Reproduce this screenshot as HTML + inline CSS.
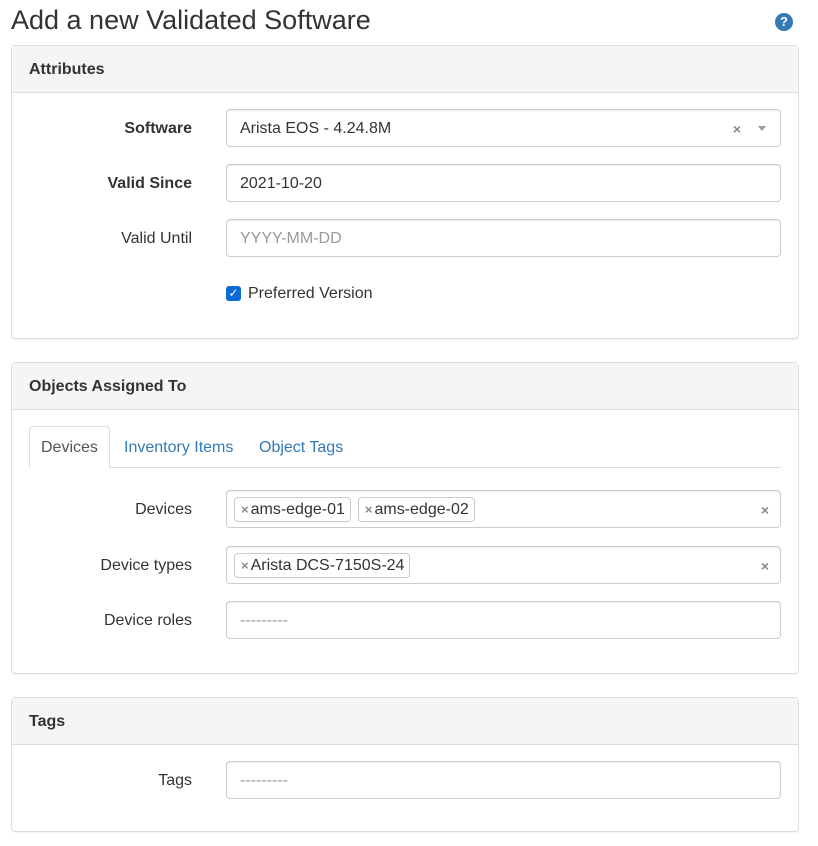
<!DOCTYPE html>
<html><head><meta charset="utf-8"><style>
*{box-sizing:border-box;margin:0;padding:0}
body{width:818px;height:846px;background:#fff;font-family:"Liberation Sans",sans-serif;font-size:16px;color:#333;position:relative;overflow:hidden}
.a{position:absolute}
h1{position:absolute;left:11px;top:3px;font-size:27px;font-weight:normal;color:#333;line-height:34px}
.help{left:775px;top:13px;width:18px;height:18px;border-radius:50%;background:#337ab7;color:#fff;font-size:13px;font-weight:bold;text-align:center;line-height:18px}
.panel{position:absolute;left:11px;width:788px;border:1px solid #ddd;border-radius:4px;box-shadow:0 1px 1px rgba(0,0,0,.05)}
.ph{height:47px;background:#f5f5f5;border-bottom:1px solid #ddd;padding:15px 0 0 17px;font-weight:bold;font-size:16px}
.lbl{position:absolute;right:626px;width:180px;text-align:right;line-height:40px}
.inp{position:absolute;left:226px;width:555px;height:38px;border:1px solid #ccc;border-radius:4px;padding:0 13px;line-height:38px;box-shadow:inset 0 1px 1px rgba(0,0,0,.075)}
.ph2{color:#999}
.x{position:absolute;right:11px;top:0;color:#888;font-size:14px;font-weight:bold}
.chip{display:inline-block;border:1px solid #ccc;border-radius:4px;background:#fff;height:25px;line-height:24px;padding:0 5px 0 6px;margin:6px 3px 0 -6px;vertical-align:top}
.chip b{color:#888;font-size:13px;margin-right:2px}
.tab{position:absolute;top:427px;line-height:41px;color:#337ab7}
</style></head><body>
<h1>Add a new Validated Software</h1>
<div class="a help">?</div>

<div class="panel" style="top:45px;height:294px"><div class="ph">Attributes</div></div>
<div class="lbl" style="top:109px;font-weight:bold">Software</div>
<div class="inp" style="top:109px">Arista EOS - 4.24.8M<span class="x" style="right:39px">×</span><span class="a" style="right:14px;top:16px;border:4px solid transparent;border-top:5px solid #999;border-bottom:0"></span></div>
<div class="lbl" style="top:164px;font-weight:bold">Valid Since</div>
<div class="inp" style="top:164px">2021-10-20</div>
<div class="lbl" style="top:219px">Valid Until</div>
<div class="inp ph2" style="top:219px">YYYY-MM-DD</div>
<div class="a" style="left:226px;top:286px;width:15px;height:15px;background:#0b6bd6;border-radius:3px;color:#fff;font-size:12px;line-height:15px;text-align:center">✓</div>
<div class="a" style="left:248px;top:285px">Preferred Version</div>

<div class="panel" style="top:362px;height:312px"><div class="ph">Objects Assigned To</div></div>
<div class="a" style="left:29px;top:467px;width:752px;border-top:1px solid #ddd"></div>
<div class="a" style="left:29px;top:426px;width:81px;height:42px;border:1px solid #ddd;border-bottom:1px solid #fff;border-radius:4px 4px 0 0;background:#fff"></div>
<div class="tab" style="left:41px;color:#555">Devices</div>
<div class="tab" style="left:124px">Inventory Items</div>
<div class="tab" style="left:259px">Object Tags</div>
<div class="lbl" style="top:490px">Devices</div>
<div class="inp" style="top:490px;padding-left:13px"><span class="chip"><b>×</b>ams-edge-01</span><span class="chip" style="margin-left:4px"><b>×</b>ams-edge-02</span><span class="x">×</span></div>
<div class="lbl" style="top:546px">Device types</div>
<div class="inp" style="top:546px"><span class="chip"><b>×</b>Arista DCS-7150S-24</span><span class="x">×</span></div>
<div class="lbl" style="top:601px">Device roles</div>
<div class="inp ph2" style="top:601px">---------</div>

<div class="panel" style="top:697px;height:135px"><div class="ph">Tags</div></div>
<div class="lbl" style="top:761px">Tags</div>
<div class="inp ph2" style="top:761px">---------</div>
</body></html>
